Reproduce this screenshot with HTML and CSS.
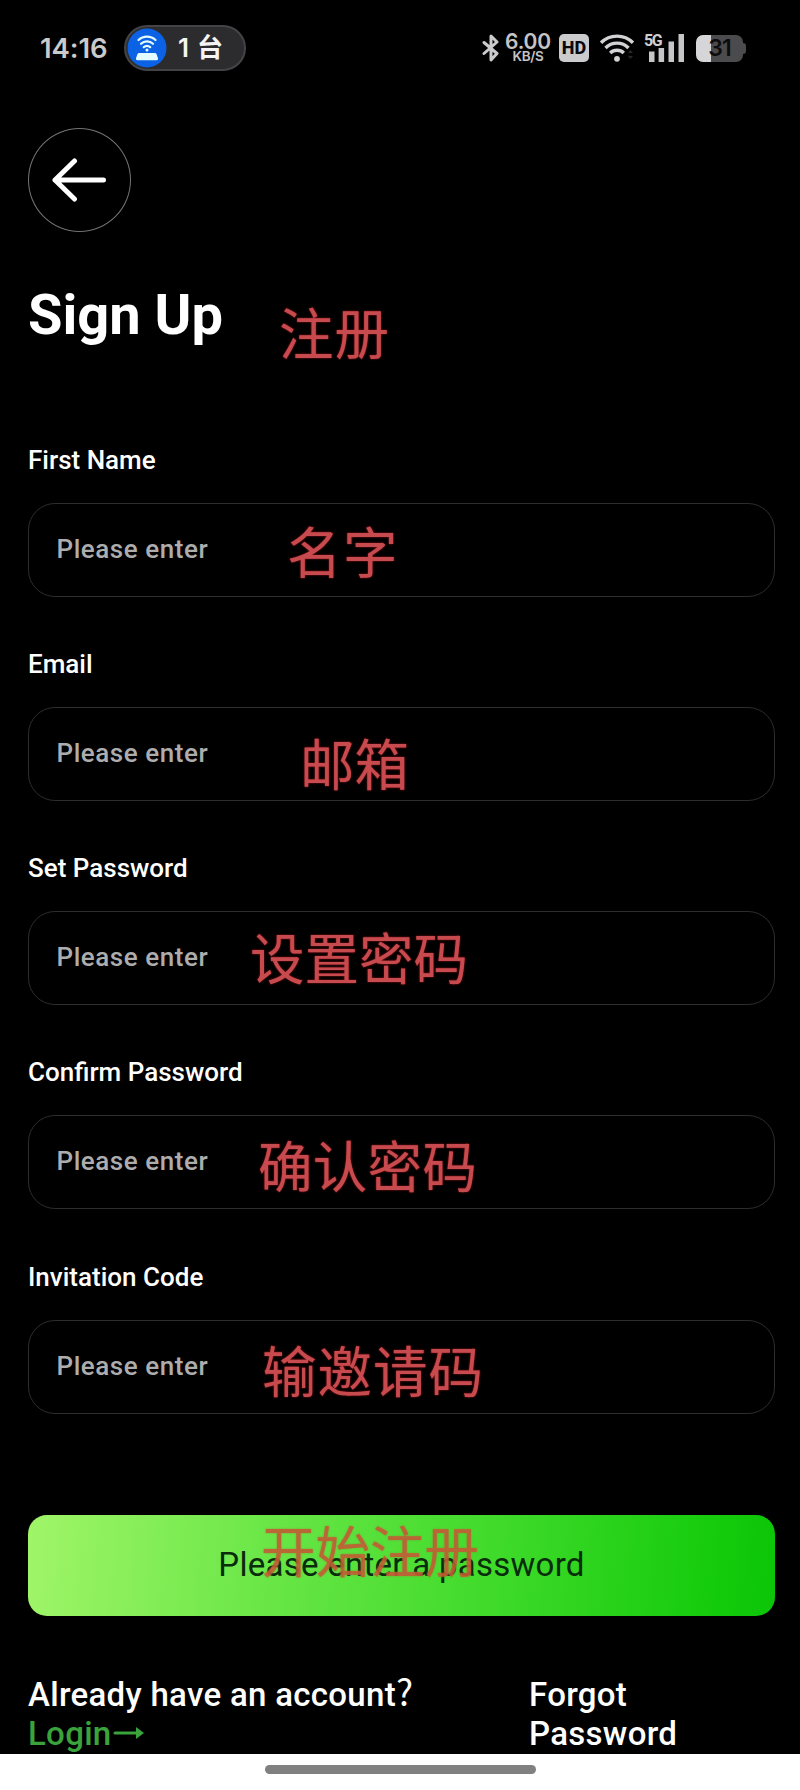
FILE: index.html
```html
<!DOCTYPE html>
<html lang="en">
<head>
<meta charset="utf-8">
<title>Sign Up</title>
<link rel="stylesheet" href="styles.css">
</head>
<body>
<div class="screen">
  <header class="status">
    <span class="clock">14:16</span>
    <span class="hotspot">
      <svg width="40" height="40" viewBox="0 0 40 40">
        <circle cx="20" cy="20" r="19.5" fill="#0c62e4"/>
        <g fill="none" stroke="#e4fbff" stroke-width="2.2" stroke-linecap="round">
          <path d="M11.500 12a12.200 12.200 0 0 1 17 0"/>
          <path d="M14 15.800a8.600 8.600 0 0 1 12 0"/>
          <path d="M16.800 19.200a5 5 0 0 1 6.400 0"/>
        </g>
        <circle cx="20" cy="22" r="1.500" fill="#e4fbff"/>
        <path d="M12.200 25h15.600q1.400 0 1.800 1.200l1.400 4q.5 2-1.500 2h-19q-2 0-1.500-2l1.400-4q.4-1.200 1.800-1.200z" fill="#e4fbff"/>
      </svg>
      <span class="count">1 台</span>
    </span>
    <div class="icons">
      <svg class="bt" width="18" height="30" viewBox="0 0 18 30" fill="none" stroke="#cbcbcd" stroke-width="3" stroke-linejoin="round" stroke-linecap="round"><path d="M2 9.500L15 20.500L9 27V3L15 9L2 20.500"/></svg>
      <div class="speed"><b>6.00</b><span>KB/S</span></div>
      <span class="hd">HD</span>
      <svg class="wifi" width="36" height="30" viewBox="0 0 36 30">
        <g fill="none" stroke="#d2d2d4" stroke-width="3.400">
          <path d="M2 9.800a22.500 22.500 0 0 1 32 0"/>
          <path d="M6.500 15a16 16 0 0 1 23 0"/>
          <path d="M11.200 20a9.600 9.600 0 0 1 13.600 0"/>
        </g>
        <circle cx="18" cy="25.800" r="2.900" fill="#d2d2d4"/>
        <path d="M29 20h5l-2.500-3zM29 23h5l-2.500 3z" fill="#28282a"/>
      </svg>
      <div class="signal">
        <span class="net">5G</span>
        <svg width="36" height="28" viewBox="0 0 36 28" fill="#c6c6c8"><path d="M0 17.500h5.500V28H0zM9.600 14h5.500v14H9.600zM19.500 7.500H25V28h-5.500zM29.500 0H35v28h-5.500z"/></svg>
      </div>
      <div class="battery"><span>31</span></div>
    </div>
  </header>

  <main class="page">
    <button class="back" aria-label="Back">
      <svg width="56" height="46" viewBox="0 0 56 46" fill="none" stroke="#fff" stroke-width="5" stroke-linecap="round" stroke-linejoin="round"><path d="M51.500 23H3M22.500 4L3 23L22.500 42"/></svg>
    </button>
    <h1 class="title">Sign Up<span class="note note-title">注册</span></h1>

    <form class="form">
      <div class="field"><label>First Name</label><div class="box">Please enter<span class="note note-name">名字</span></div></div>
      <div class="field"><label>Email</label><div class="box">Please enter<span class="note note-email">邮箱</span></div></div>
      <div class="field"><label>Set Password</label><div class="box">Please enter<span class="note note-set">设置密码</span></div></div>
      <div class="field"><label>Confirm Password</label><div class="box">Please enter<span class="note note-confirm">确认密码</span></div></div>
      <div class="field"><label>Invitation Code</label><div class="box">Please enter<span class="note note-code">输邀请码</span></div></div>
    </form>

    <div class="submit">Please enter a password<span class="note note-submit">开始注册</span></div>

    <div class="links">
      <div class="account">Already have an account<span class="mark">?</span><br><a class="login">Login<svg width="33" height="16" viewBox="0 0 33 16"><path d="M3 8h22" stroke="#3aa33c" stroke-width="3" stroke-linecap="round"/><path d="M24 2l8 6-8 6z" fill="#3aa33c"/></svg></a></div>
      <div class="forgot">Forgot<br>Password</div>
    </div>
  </main>
  <footer class="nav"><span class="handle"></span></footer>
</div>
</body>
</html>
```
FILE: styles.css
```css
* { box-sizing: border-box; }
body { margin: 0; background: #000; }
.screen {
  width: 800px;
  height: 1790px;
  display: flex;
  flex-direction: column;
  overflow: hidden;
  background: #000;
  color: #fff;
  font-family: Roboto, "Noto Sans CJK SC", sans-serif;
}
.status {
  height: 96px;
  flex: none;
  display: flex;
  align-items: center;
  padding: 0 54px 0 40px;
}
.clock {
  width: 84px;
  font: 600 27.500px/40px Inter, sans-serif;
  letter-spacing: -0.1px;
  color: #cacaca;
}
.hotspot {
  width: 122px;
  height: 46px;
  display: flex;
  align-items: center;
  gap: 11px;
  padding-left: 1px;
  border: 2px solid #444446;
  border-radius: 23px;
  background: #2c2c2e;
}
.hotspot svg { flex: none; }
.count {
  font: 600 26px/40px Inter, "Noto Sans CJK SC", sans-serif;
  white-space: nowrap;
  word-spacing: 1.500px;
  color: #f4f4f4;
}
.icons { display: flex; align-items: center; margin-left: auto; height: 30px; }
.speed {
  width: 46px;
  margin: 0 1px 0 5px;
  display: flex;
  flex-direction: column;
  align-items: center;
  color: #c4c4c6;
  font-family: Inter, sans-serif;
}
.speed b { font-weight: 600; font-size: 21px; line-height: 17px; letter-spacing: -0.2px; }
.speed span { font-weight: 600; font-size: 13.500px; line-height: 13px; letter-spacing: -0.3px; }
.hd {
  width: 30px;
  height: 28px;
  margin-left: 7px;
  border-radius: 5px;
  background: #cbcbcd;
  color: #08080a;
  font: 800 18px/28px Roboto, sans-serif;
  text-align: center;
}
.bt { margin-left: -1px; }
.wifi { margin-left: 10px; }
.signal { position: relative; margin-left: 14px; width: 36px; height: 28px; }
.net {
  position: absolute;
  left: -5px;
  top: -1px;
  font: 700 16px/15px Roboto, sans-serif;
  letter-spacing: -1.500px;
  color: #cfcfd1;
}
.battery {
  position: relative;
  width: 47px;
  height: 27px;
  margin: 0 3px 0 11px;
  border-radius: 7px;
  background: linear-gradient(90deg, #d6d6d8 15px, #4b4b4d 15px);
  color: #0c0c0e;
  font: 600 23px/27px Inter, sans-serif;
  letter-spacing: -1px;
  text-align: center;
}
.battery::after {
  content: "";
  position: absolute;
  right: -3px;
  top: 8px;
  width: 3px;
  height: 11px;
  border-radius: 0 3px 3px 0;
  background: #4b4b4d;
}
.page {
  height: 1658px;
  flex: none;
  padding: 32px 25px 0 28px;
  display: flex;
  flex-direction: column;
}
.back {
  width: 103px;
  height: 104px;
  flex: none;
  padding: 0 0 0 1px;
  display: flex;
  align-items: center;
  justify-content: center;
  border: 1.500px solid #737373;
  border-radius: 50%;
  background: transparent;
}
.title {
  position: relative;
  margin: 51px 0 0;
  font-size: 56px;
  line-height: 64px;
  font-weight: 700;
  height: 64px;
}
.form { margin-top: 84.600px; display: flex; flex-direction: column; gap: 39.300px; }
.field { height: 165px; flex: none; display: flex; flex-direction: column; justify-content: space-between; }
.field label {
  font-size: 26px;
  line-height: 34px;
  font-weight: 500;
  margin-top: 11px;
}
.box {
  position: relative;
  height: 94px;
  padding: 0 27.500px;
  border: 1px solid #2d2d2d;
  border-radius: 27px;
  font-size: 26px;
  line-height: 91px;
  font-weight: 500;
  letter-spacing: 0.55px;
  color: #adadad;
}
.note {
  position: absolute;
  font-family: "Noto Sans CJK SC", sans-serif;
  font-size: 54.500px;
  line-height: 60px;
  font-weight: 400;
  letter-spacing: 0;
  white-space: nowrap;
  color: #c74a4e;
  text-shadow: 0 0 2px #b51d22;
}
.note-title { left: 251px; top: 18px; letter-spacing: 1px; }
.note-name { left: 258px; top: 16px; letter-spacing: 1.500px; }
.note-email { left: 271px; top: 24px; }
.note-set { left: 221px; top: 14px; }
.note-confirm { left: 229px; top: 18px; letter-spacing: 0.3px; }
.note-code { left: 233px; top: 18px; letter-spacing: 1px; }
.note-submit { left: 233px; top: 4px; color: #c45a35; text-shadow: 0 0 2px #a67e36; opacity: 0.9; }
.submit {
  position: relative;
  height: 101px;
  flex: none;
  margin-top: 101px;
  border-radius: 19px;
  background: linear-gradient(95deg, #a0f568 0%, #65e544 35%, #3cd928 65%, #14cb0b 92%, #0cc507 100%);
  color: #092c0b;
  font-size: 33px;
  letter-spacing: 0.27px;
  line-height: 99px;
  text-align: center;
}
.links {
  display: flex;
  margin-top: 59px;
  font-size: 33px;
  letter-spacing: 0.3px;
  line-height: 39.500px;
  font-weight: 500;
}
.account { width: 501px; }
.mark { font: 400 36px/30px "Noto Sans CJK SC", sans-serif; }
.login { color: #3aa33c; }
.login svg { vertical-align: 4px; }
.nav {
  height: 36px;
  flex: none;
  display: flex;
  justify-content: center;
  padding-top: 11px;
  background: #fff;
}
.handle { width: 271px; height: 9px; border-radius: 5px; background: #808080; }
```
